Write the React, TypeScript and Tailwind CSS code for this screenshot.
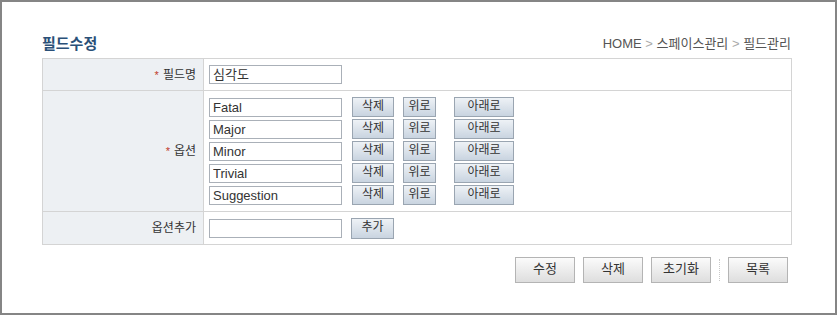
const options = ["Fatal", "Major", "Minor", "Trivial", "Suggestion"];

const SmallButton = ({ label, className = "" }: { label: string; className?: string }) => (
  <button
    className={`h-[20px] border border-[#9aa5b1] bg-gradient-to-b from-[#eef2f6] to-[#c9d4e0] text-[12px] leading-[16px] text-[#333] pb-[2px] ${className}`}
  >
    {label}
  </button>
);

const BigButton = ({ label }: { label: string }) => (
  <button className="w-[60px] h-[26px] border border-[#b4b4b4] bg-gradient-to-b from-[#fbfbfb] to-[#dedede] text-[13px] text-[#333] leading-[20px] pb-[2px]">
    {label}
  </button>
);

const Required = () => <span className="text-[#c0392b] text-[11px] mr-[4px]">*</span>;

const App = () => {
  return (
    <div
      className="w-[837px] h-[315px] border-2 border-[#858585] bg-white pt-[34px] pl-[40px]"
      style={{ fontFamily: '"Liberation Sans", "Noto Sans CJK KR", sans-serif' }}
    >
      <div className="w-[750px]">
        <div className="flex justify-between items-center h-[16px] mb-[6px]">
          <h1 className="text-[15px] font-bold text-[#2a5078] leading-[16px]">필드수정</h1>
          <div className="text-[13px] text-[#555] leading-[16px] pr-[1px]">
            HOME <span className="text-[#aaa]">&gt;</span> 스페이스관리{" "}
            <span className="text-[#aaa]">&gt;</span> 필드관리
          </div>
        </div>

        <table className="w-full border-collapse text-[12px] text-[#333]">
          <tbody>
            <tr className="h-[32px]">
              <td className="w-[161px] border border-[#d4d4d4] bg-[#edf0f3] text-right pr-[7px]">
                <Required />
                필드명
              </td>
              <td className="border border-[#d4d4d4] pl-[5px]">
                <input
                  defaultValue="심각도"
                  className="w-[133px] h-[19px] border border-[#aab0b8] px-[3px] text-[13px] outline-none"
                />
              </td>
            </tr>
            <tr className="h-[121px]">
              <td className="border border-[#d4d4d4] bg-[#edf0f3] text-right pr-[7px]">
                <Required />
                옵션
              </td>
              <td className="border border-[#d4d4d4] pl-[5px] pt-[5px] pb-[3px]">
                <div className="flex flex-col">
                  {options.map((o) => (
                    <div key={o} className="flex items-start h-[22px]">
                      <input
                        defaultValue={o}
                        className="w-[133px] h-[19px] mt-[1px] border border-[#aab0b8] px-[3px] text-[13px] outline-none"
                      />
                      <SmallButton label="삭제" className="w-[42px] ml-[10px]" />
                      <SmallButton label="위로" className="w-[33px] ml-[9px]" />
                      <SmallButton label="아래로" className="w-[60px] ml-[18px]" />
                    </div>
                  ))}
                </div>
              </td>
            </tr>
            <tr className="h-[33px]">
              <td className="border border-[#d4d4d4] bg-[#edf0f3] text-right pr-[7px]">옵션추가</td>
              <td className="border border-[#d4d4d4] pl-[5px]">
                <div className="flex items-center">
                  <input className="w-[133px] h-[19px] border border-[#aab0b8] px-[3px] text-[13px] outline-none" />
                  <SmallButton label="추가" className="w-[43px] ml-[9px] h-[21px]" />
                </div>
              </td>
            </tr>
          </tbody>
        </table>

        <div className="flex justify-end items-center mt-[11px] pr-[4px]">
          <BigButton label="수정" />
          <div className="ml-[8px]">
            <BigButton label="삭제" />
          </div>
          <div className="ml-[8px]">
            <BigButton label="초기화" />
          </div>
          <div className="mx-[8px] h-[22px] border-l border-dotted border-[#c8c8c8]" />
          <BigButton label="목록" />
        </div>
      </div>
    </div>
  );
};

export default App;
